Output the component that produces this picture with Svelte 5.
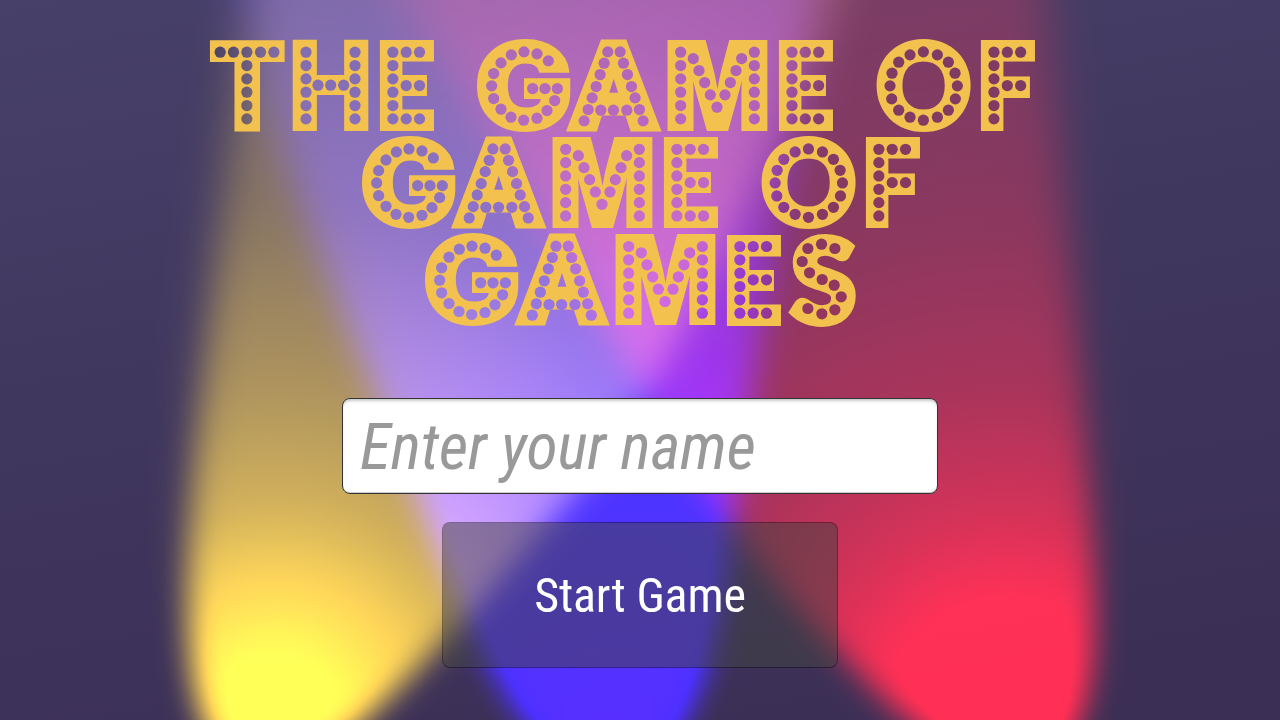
<script>
  // Ink metrics come from a canvas so every letter can be fitted to its marquee slot.
  const styles = {
    M: { family: 'Inter', size: 119, edge: 4, cls: 'inter', base: 129 },
    G: { family: 'Inter', size: 119, edge: 4, cls: 'inter', base: 129 },
    A: { family: 'Roboto', size: 118, edge: 7, cls: 'roboto', base: 127.6 }
  };
  const plain = { family: 'Lato', size: 115, edge: 8, cls: '', base: 127.2 };
  const widths = { T: 75.6, H: 77, E: 54.8, G: 94, A: 93.5, M: 101, O: 95.5, F: 54.8, S: 67 };

  const column = (x) => [66, 106, 146, 186, 226, 266].map((y) => [x, y]);
  const bulbs = {
    T: [[33, 66], [73, 66], [154, 66], [194, 66], ...column(113)],
    H: [...column(42), ...column(189), [78, 165], [116, 165], [155, 165]],
    E: [...column(41), [81, 66], [121, 66], [81, 166], [121, 166], [81, 266], [121, 266]],
    F: [...column(41), [81, 66], [121, 66], [81, 166], [121, 166]],
    G: [[214, 92], [180, 71], [141, 65], [103, 74], [72, 98], [50, 130], [44, 167], [50, 205], [72, 237], [102, 261], [140, 270], [180, 264], [210, 241], [233, 211], [241, 175], [204, 175], [167, 175]],
    A: [[123, 65], [160, 65], [112, 99], [170, 99], [100, 133], [182, 133], [88, 169], [194, 169], [76, 203], [205, 203], [64, 238], [218, 238], [102, 240], [140, 240], [180, 240], [52, 272], [229, 272]],
    M: [...column(41), ...column(262), [79, 85], [96, 121], [113, 157], [130, 194], [150, 231], [174, 194], [190, 157], [207, 121], [224, 85]],
    O: [[143, 65], [185, 74], [218, 96], [238, 129], [245, 167], [239, 206], [218, 240], [185, 261], [143, 270], [103, 261], [69, 240], [48, 206], [43, 167], [49, 129], [69, 96], [103, 74]],
    S: [[137, 72], [97, 59], [56, 72], [39, 111], [61, 145], [99, 165], [135, 182], [156, 217], [137, 256], [98, 268], [56, 252]]
  };

  const ctx = document.createElement('canvas').getContext('2d');
  function fit(ch, left) {
    const style = styles[ch] ?? plain;
    ctx.font = `900 ${style.size}px ${style.family}`;
    const m = ctx.measureText(ch);
    const s = widths[ch] / (m.actualBoundingBoxLeft + m.actualBoundingBoxRight + style.edge);
    return {
      ch, left,
      cls: style.cls,
      base: style.base,
      x: left + (m.actualBoundingBoxLeft + style.edge / 2) * s,
      length: m.width * s
    };
  }

  const lines = [
    { text: 'THE GAME OF', top: 0, xs: [209.2, 292, 379.2, 0, 477, 566.8, 667, 778.3, 0, 875.7, 980.3] },
    { text: 'GAME OF', top: 97.1, xs: [362, 451.9, 552, 663.2, 0, 760.8, 865.2] },
    { text: 'GAMES', top: 194.3, xs: [425, 515, 615, 726.2, 789.2] }
  ].map((l) => ({ ...l, letters: [...l.text].map((ch, i) => (ch === ' ' ? { ch } : fit(ch, l.xs[i]))) }));

  const beams = [
    { fill: 'url(#yellow)', d: 'M262 -80C235 80 210 300 196 440C182 590 183 690 218 748C250 800 320 760 385 700C440 650 495 585 595 470C705 315 795 110 865 -80Z' },
    { fill: 'url(#blue)', d: 'M225 -80C250 60 300 215 370 380C410 480 440 560 477 640C517 720 560 775 620 770C680 760 712 680 728 560C745 410 785 190 832 -80Z' },
    { fill: 'url(#red)', d: 'M335 -80C460 60 580 290 680 450C740 540 795 610 865 680C930 750 1020 790 1060 750C1100 710 1099 610 1090 500C1077 300 1059 150 1040 -80Z' }
  ];
</script>

<main>
  <svg class="lights" viewBox="0 0 1280 720" preserveAspectRatio="none" aria-hidden="true">
    <defs>
      <radialGradient id="yellow" gradientUnits="userSpaceOnUse" cx="275" cy="725" r="1000">
        <stop offset="0" stop-color="#ffd700" />
        <stop offset=".07" stop-color="#ffd700" stop-opacity=".97" />
        <stop offset=".13" stop-color="#ffd700" stop-opacity=".79" />
        <stop offset=".22" stop-color="#ffd700" stop-opacity=".58" />
        <stop offset=".34" stop-color="#ffd700" stop-opacity=".43" />
        <stop offset=".52" stop-color="#ffd700" stop-opacity=".27" />
        <stop offset="1" stop-color="#ffd700" stop-opacity=".12" />
      </radialGradient>
      <radialGradient id="blue" gradientUnits="userSpaceOnUse" cx="610" cy="730" r="900">
        <stop offset="0" stop-color="#1c00ff" />
        <stop offset=".23" stop-color="#1600ff" stop-opacity=".72" />
        <stop offset=".4" stop-color="#1600ff" stop-opacity=".59" />
        <stop offset=".6" stop-color="#1600ff" stop-opacity=".4" />
        <stop offset="1" stop-color="#1600ff" stop-opacity=".2" />
      </radialGradient>
      <radialGradient id="red" gradientUnits="userSpaceOnUse" cx="1010" cy="730" r="1000">
        <stop offset="0" stop-color="#ff0000" />
        <stop offset=".13" stop-color="#ff0000" stop-opacity=".77" />
        <stop offset=".22" stop-color="#ff0000" stop-opacity=".59" />
        <stop offset=".34" stop-color="#ff0000" stop-opacity=".42" />
        <stop offset=".52" stop-color="#ff0000" stop-opacity=".29" />
        <stop offset="1" stop-color="#ff0000" stop-opacity=".12" />
      </radialGradient>
      <linearGradient id="down" x1="0" y1="0" x2="0" y2="1">
        <stop offset=".1" stop-color="#fff" />
        <stop offset=".85" stop-color="#fff" stop-opacity="0" />
      </linearGradient>
      <linearGradient id="up" x1="0" y1="0" x2="0" y2="1">
        <stop offset=".1" stop-color="#fff" stop-opacity="0" />
        <stop offset=".85" stop-color="#fff" />
      </linearGradient>
      <mask id="far" maskUnits="userSpaceOnUse" x="0" y="0" width="1280" height="720" mask-type="alpha" style="mask-type: alpha">
        <rect width="1280" height="720" fill="url(#down)" />
      </mask>
      <mask id="near" maskUnits="userSpaceOnUse" x="0" y="0" width="1280" height="720" style="mask-type: alpha">
        <rect width="1280" height="720" fill="url(#up)" />
      </mask>
    </defs>
    {#each beams as beam}
      <g class="layer" mask="url(#far)"><path class="soft" fill={beam.fill} d={beam.d} /></g>
      <g class="layer" mask="url(#near)"><path class="crisp" fill={beam.fill} d={beam.d} /></g>
    {/each}
  </svg>

  <svg class="title" viewBox="0 0 1280 340" role="heading" aria-level="1">
    <mask id="bulbs" maskUnits="userSpaceOnUse" x="0" y="0" width="1280" height="340">
      <rect width="1280" height="340" fill="#fff" />
      {#each lines as line}
        {#each line.letters as l}
          {#if l.ch !== ' '}
            {#each bulbs[l.ch] as [bx, by]}
              <circle cx={l.left + bx / 3} cy={30.2 + line.top + by / 3} r="5.6" fill="#000" />
            {/each}
          {/if}
        {/each}
      {/each}
    </mask>
    <g mask="url(#bulbs)">
      {#each lines as line}
        <text y={127.2 + line.top}>{#each line.letters as l}{#if l.ch === ' '}<tspan>{' '}</tspan>{:else}<tspan class={l.cls} x={l.x} y={l.base + line.top} textLength={l.length} lengthAdjust="spacingAndGlyphs">{l.ch}</tspan>{/if}{/each}</text>
      {/each}
    </g>
  </svg>

  <form onsubmit={(e) => e.preventDefault()}>
    <input type="text" placeholder="Enter your name" />
    <button>Start Game</button>
  </form>
</main>

<style>
  :global(body) { margin: 0; overflow: hidden; }
  main {
    position: relative;
    isolation: isolate;
    box-sizing: border-box;
    width: 100vw;
    height: 100vh;
    overflow: hidden;
    display: flex;
    flex-direction: column;
    align-items: center;
    background: linear-gradient(170deg, #474069 0%, #3f365d 50%, #3b2e54 100%);
    font-family: "Roboto Condensed", Roboto, sans-serif;
  }
  .lights { position: absolute; inset: 0; width: 100%; height: 100%; z-index: -1; mix-blend-mode: plus-lighter; }
  .layer { mix-blend-mode: plus-lighter; }
  .soft { filter: blur(23px); }
  .crisp { filter: blur(15px); }
  .title { width: 1280px; height: 340px; flex: none; }
  .title text {
    font: 900 115px Lato, sans-serif;
    fill: #f2c14e;
    stroke: #f2c14e;
    stroke-width: 8px;
    stroke-miterlimit: 6;
  }
  .title .inter { font-family: Inter, sans-serif; font-size: 119px; stroke-width: 4px; }
  .title .roboto { font-family: Roboto, sans-serif; font-size: 118px; stroke-width: 7px; }
  form { display: flex; flex-direction: column; align-items: center; gap: 28px; padding-top: 58px; }
  input, button { box-sizing: border-box; font-family: inherit; font-stretch: 75%; border-radius: 8px; }
  input {
    width: 596px;
    height: 96px;
    padding: 2px 17px 0;
    border: 1px solid #333;
    background: #fff;
    box-shadow: inset 0 3px 3px -1px rgba(0, 0, 0, .22), inset 0 -1px 0 #ccc;
    font-size: 64px;
    letter-spacing: -.12px;
    font-style: italic;
    outline: none;
  }
  input::placeholder { color: #999; opacity: 1; }
  button {
    width: 396px;
    height: 146px;
    padding: 0;
    border: 1px solid rgba(0, 0, 0, .4);
    background: rgba(66, 66, 66, .5);
    background-clip: padding-box;
    color: #fff;
    font-size: 48px;
    letter-spacing: -.15px;
  }
</style>
